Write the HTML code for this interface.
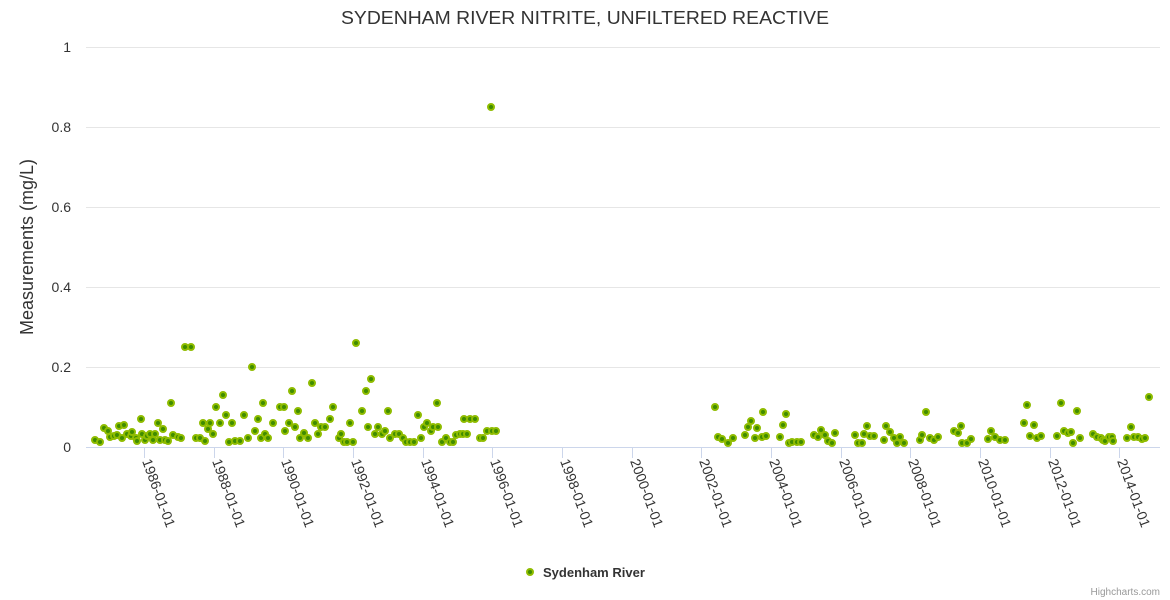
<!DOCTYPE html>
<html><head><meta charset="utf-8"><style>
html,body{margin:0;padding:0;background:#fff;}
svg{display:block;font-family:"Liberation Sans",Arial,sans-serif;}
</style></head><body>
<svg width="1170" height="600" viewBox="0 0 1170 600" xmlns="http://www.w3.org/2000/svg">
<rect width="1170" height="600" fill="#fff"/>
<text x="585" y="24" text-anchor="middle" font-size="18" fill="#333" textLength="488" lengthAdjust="spacingAndGlyphs">SYDENHAM RIVER NITRITE, UNFILTERED REACTIVE</text>
<g stroke="#e6e6e6" stroke-width="1">
<line x1="86" y1="47.5" x2="1160" y2="47.5"/><line x1="86" y1="127.5" x2="1160" y2="127.5"/><line x1="86" y1="207.5" x2="1160" y2="207.5"/><line x1="86" y1="287.5" x2="1160" y2="287.5"/><line x1="86" y1="367.5" x2="1160" y2="367.5"/>
</g>
<line x1="86" y1="447.5" x2="1160" y2="447.5" stroke="#ccd6eb"/>
<g stroke="#ccd6eb"><line x1="144.5" y1="448" x2="144.5" y2="458"/><line x1="214.5" y1="448" x2="214.5" y2="458"/><line x1="283.5" y1="448" x2="283.5" y2="458"/><line x1="353.5" y1="448" x2="353.5" y2="458"/><line x1="423.5" y1="448" x2="423.5" y2="458"/><line x1="492.5" y1="448" x2="492.5" y2="458"/><line x1="562.5" y1="448" x2="562.5" y2="458"/><line x1="632.5" y1="448" x2="632.5" y2="458"/><line x1="701.5" y1="448" x2="701.5" y2="458"/><line x1="771.5" y1="448" x2="771.5" y2="458"/><line x1="841.5" y1="448" x2="841.5" y2="458"/><line x1="910.5" y1="448" x2="910.5" y2="458"/><line x1="980.5" y1="448" x2="980.5" y2="458"/><line x1="1050.5" y1="448" x2="1050.5" y2="458"/><line x1="1119.5" y1="448" x2="1119.5" y2="458"/></g>
<g font-size="14" fill="#333" text-anchor="end">
<text x="71" y="52">1</text><text x="71" y="132">0.8</text><text x="71" y="212">0.6</text><text x="71" y="292">0.4</text><text x="71" y="372">0.2</text><text x="71" y="452">0</text>
</g>
<text transform="translate(33,247) rotate(-90)" text-anchor="middle" font-size="18" fill="#333">Measurements (mg/L)</text>
<g font-size="14" fill="#333">
<text transform="translate(142,461) rotate(70)">1986-01-01</text>
<text transform="translate(212,461) rotate(70)">1988-01-01</text>
<text transform="translate(281,461) rotate(70)">1990-01-01</text>
<text transform="translate(351,461) rotate(70)">1992-01-01</text>
<text transform="translate(421,461) rotate(70)">1994-01-01</text>
<text transform="translate(490,461) rotate(70)">1996-01-01</text>
<text transform="translate(560,461) rotate(70)">1998-01-01</text>
<text transform="translate(630,461) rotate(70)">2000-01-01</text>
<text transform="translate(699,461) rotate(70)">2002-01-01</text>
<text transform="translate(769,461) rotate(70)">2004-01-01</text>
<text transform="translate(839,461) rotate(70)">2006-01-01</text>
<text transform="translate(908,461) rotate(70)">2008-01-01</text>
<text transform="translate(978,461) rotate(70)">2010-01-01</text>
<text transform="translate(1048,461) rotate(70)">2012-01-01</text>
<text transform="translate(1117,461) rotate(70)">2014-01-01</text>
</g>
<g fill="#3f8c00" stroke="#8fbc00" stroke-width="2">
<circle cx="95" cy="440" r="3"/><circle cx="100" cy="442" r="3"/><circle cx="104" cy="428" r="3"/><circle cx="108" cy="431" r="3"/><circle cx="110" cy="437" r="3"/><circle cx="114" cy="436" r="3"/><circle cx="117" cy="435" r="3"/><circle cx="119" cy="426" r="3"/><circle cx="122" cy="438" r="3"/><circle cx="124" cy="425" r="3"/><circle cx="127" cy="434" r="3"/><circle cx="131" cy="436" r="3"/><circle cx="132" cy="432" r="3"/><circle cx="136" cy="438" r="3"/><circle cx="137" cy="441" r="3"/><circle cx="141" cy="419" r="3"/><circle cx="142" cy="434" r="3"/><circle cx="145" cy="440" r="3"/><circle cx="147" cy="436" r="3"/><circle cx="150" cy="434" r="3"/><circle cx="153" cy="440" r="3"/><circle cx="155" cy="434" r="3"/><circle cx="158" cy="423" r="3"/><circle cx="160" cy="440" r="3"/><circle cx="163" cy="429" r="3"/><circle cx="165" cy="440" r="3"/><circle cx="168" cy="441" r="3"/><circle cx="171" cy="403" r="3"/><circle cx="173" cy="435" r="3"/><circle cx="178" cy="437" r="3"/><circle cx="181" cy="438" r="3"/><circle cx="185" cy="347" r="3"/><circle cx="191" cy="347" r="3"/><circle cx="196" cy="438" r="3"/><circle cx="200" cy="438" r="3"/><circle cx="203" cy="423" r="3"/><circle cx="205" cy="441" r="3"/><circle cx="208" cy="429" r="3"/><circle cx="210" cy="423" r="3"/><circle cx="213" cy="434" r="3"/><circle cx="216" cy="407" r="3"/><circle cx="220" cy="423" r="3"/><circle cx="223" cy="395" r="3"/><circle cx="226" cy="415" r="3"/><circle cx="229" cy="442" r="3"/><circle cx="232" cy="423" r="3"/><circle cx="235" cy="441" r="3"/><circle cx="240" cy="441" r="3"/><circle cx="244" cy="415" r="3"/><circle cx="248" cy="438" r="3"/><circle cx="252" cy="367" r="3"/><circle cx="255" cy="431" r="3"/><circle cx="258" cy="419" r="3"/><circle cx="261" cy="438" r="3"/><circle cx="263" cy="403" r="3"/><circle cx="265" cy="434" r="3"/><circle cx="268" cy="438" r="3"/><circle cx="273" cy="423" r="3"/><circle cx="280" cy="407" r="3"/><circle cx="284" cy="407" r="3"/><circle cx="285" cy="431" r="3"/><circle cx="289" cy="423" r="3"/><circle cx="292" cy="391" r="3"/><circle cx="295" cy="427" r="3"/><circle cx="298" cy="411" r="3"/><circle cx="300" cy="438" r="3"/><circle cx="304" cy="433" r="3"/><circle cx="308" cy="438" r="3"/><circle cx="312" cy="383" r="3"/><circle cx="315" cy="423" r="3"/><circle cx="318" cy="434" r="3"/><circle cx="321" cy="427" r="3"/><circle cx="325" cy="427" r="3"/><circle cx="330" cy="419" r="3"/><circle cx="333" cy="407" r="3"/><circle cx="339" cy="438" r="3"/><circle cx="341" cy="434" r="3"/><circle cx="344" cy="442" r="3"/><circle cx="347" cy="442" r="3"/><circle cx="350" cy="423" r="3"/><circle cx="353" cy="442" r="3"/><circle cx="356" cy="343" r="3"/><circle cx="362" cy="411" r="3"/><circle cx="366" cy="391" r="3"/><circle cx="368" cy="427" r="3"/><circle cx="371" cy="379" r="3"/><circle cx="375" cy="434" r="3"/><circle cx="378" cy="427" r="3"/><circle cx="382" cy="434" r="3"/><circle cx="385" cy="431" r="3"/><circle cx="388" cy="411" r="3"/><circle cx="390" cy="438" r="3"/><circle cx="395" cy="434" r="3"/><circle cx="399" cy="434" r="3"/><circle cx="403" cy="438" r="3"/><circle cx="406" cy="442" r="3"/><circle cx="410" cy="442" r="3"/><circle cx="414" cy="442" r="3"/><circle cx="418" cy="415" r="3"/><circle cx="421" cy="438" r="3"/><circle cx="424" cy="427" r="3"/><circle cx="427" cy="423" r="3"/><circle cx="431" cy="431" r="3"/><circle cx="433" cy="427" r="3"/><circle cx="437" cy="403" r="3"/><circle cx="438" cy="427" r="3"/><circle cx="442" cy="442" r="3"/><circle cx="446" cy="438" r="3"/><circle cx="450" cy="442" r="3"/><circle cx="453" cy="442" r="3"/><circle cx="456" cy="435" r="3"/><circle cx="460" cy="434" r="3"/><circle cx="463" cy="434" r="3"/><circle cx="467" cy="434" r="3"/><circle cx="464" cy="419" r="3"/><circle cx="470" cy="419" r="3"/><circle cx="475" cy="419" r="3"/><circle cx="480" cy="438" r="3"/><circle cx="483" cy="438" r="3"/><circle cx="487" cy="431" r="3"/><circle cx="491" cy="107" r="3"/><circle cx="492" cy="431" r="3"/><circle cx="496" cy="431" r="3"/>
<circle cx="715" cy="407" r="3"/><circle cx="718" cy="437" r="3"/><circle cx="722" cy="439" r="3"/><circle cx="728" cy="443" r="3"/><circle cx="733" cy="438" r="3"/><circle cx="745" cy="435" r="3"/><circle cx="748" cy="427" r="3"/><circle cx="751" cy="421" r="3"/><circle cx="755" cy="438" r="3"/><circle cx="757" cy="428" r="3"/><circle cx="762" cy="437" r="3"/><circle cx="763" cy="412" r="3"/><circle cx="766" cy="436" r="3"/><circle cx="780" cy="437" r="3"/><circle cx="783" cy="425" r="3"/><circle cx="786" cy="414" r="3"/><circle cx="789" cy="443" r="3"/><circle cx="792" cy="442" r="3"/><circle cx="797" cy="442" r="3"/><circle cx="801" cy="442" r="3"/><circle cx="814" cy="435" r="3"/><circle cx="818" cy="437" r="3"/><circle cx="821" cy="430" r="3"/><circle cx="825" cy="435" r="3"/><circle cx="828" cy="441" r="3"/><circle cx="832" cy="443" r="3"/><circle cx="835" cy="433" r="3"/><circle cx="855" cy="435" r="3"/><circle cx="858" cy="443" r="3"/><circle cx="862" cy="443" r="3"/><circle cx="864" cy="434" r="3"/><circle cx="867" cy="426" r="3"/><circle cx="870" cy="436" r="3"/><circle cx="874" cy="436" r="3"/><circle cx="884" cy="440" r="3"/><circle cx="886" cy="426" r="3"/><circle cx="890" cy="432" r="3"/><circle cx="894" cy="438" r="3"/><circle cx="897" cy="443" r="3"/><circle cx="900" cy="437" r="3"/><circle cx="904" cy="443" r="3"/><circle cx="920" cy="440" r="3"/><circle cx="922" cy="435" r="3"/><circle cx="926" cy="412" r="3"/><circle cx="930" cy="438" r="3"/><circle cx="934" cy="440" r="3"/><circle cx="938" cy="437" r="3"/><circle cx="954" cy="431" r="3"/><circle cx="958" cy="433" r="3"/><circle cx="961" cy="426" r="3"/><circle cx="962" cy="443" r="3"/><circle cx="967" cy="443" r="3"/><circle cx="971" cy="439" r="3"/><circle cx="988" cy="439" r="3"/><circle cx="991" cy="431" r="3"/><circle cx="995" cy="437" r="3"/><circle cx="1000" cy="440" r="3"/><circle cx="1005" cy="440" r="3"/><circle cx="1024" cy="423" r="3"/><circle cx="1027" cy="405" r="3"/><circle cx="1030" cy="436" r="3"/><circle cx="1034" cy="425" r="3"/><circle cx="1037" cy="438" r="3"/><circle cx="1041" cy="436" r="3"/><circle cx="1057" cy="436" r="3"/><circle cx="1061" cy="403" r="3"/><circle cx="1064" cy="431" r="3"/><circle cx="1068" cy="433" r="3"/><circle cx="1071" cy="432" r="3"/><circle cx="1073" cy="443" r="3"/><circle cx="1077" cy="411" r="3"/><circle cx="1080" cy="438" r="3"/><circle cx="1093" cy="434" r="3"/><circle cx="1097" cy="437" r="3"/><circle cx="1101" cy="438" r="3"/><circle cx="1103" cy="440" r="3"/><circle cx="1105" cy="441" r="3"/><circle cx="1109" cy="437" r="3"/><circle cx="1112" cy="437" r="3"/><circle cx="1113" cy="441" r="3"/><circle cx="1127" cy="438" r="3"/><circle cx="1131" cy="427" r="3"/><circle cx="1134" cy="437" r="3"/><circle cx="1138" cy="437" r="3"/><circle cx="1142" cy="439" r="3"/><circle cx="1145" cy="438" r="3"/><circle cx="1149" cy="397" r="3"/>
<circle cx="530" cy="572" r="3"/>
</g>
<text x="543" y="577" font-size="13" font-weight="bold" fill="#333">Sydenham River</text>
<text x="1160" y="595" text-anchor="end" font-size="10" fill="#999">Highcharts.com</text>
</svg>
</body></html>
